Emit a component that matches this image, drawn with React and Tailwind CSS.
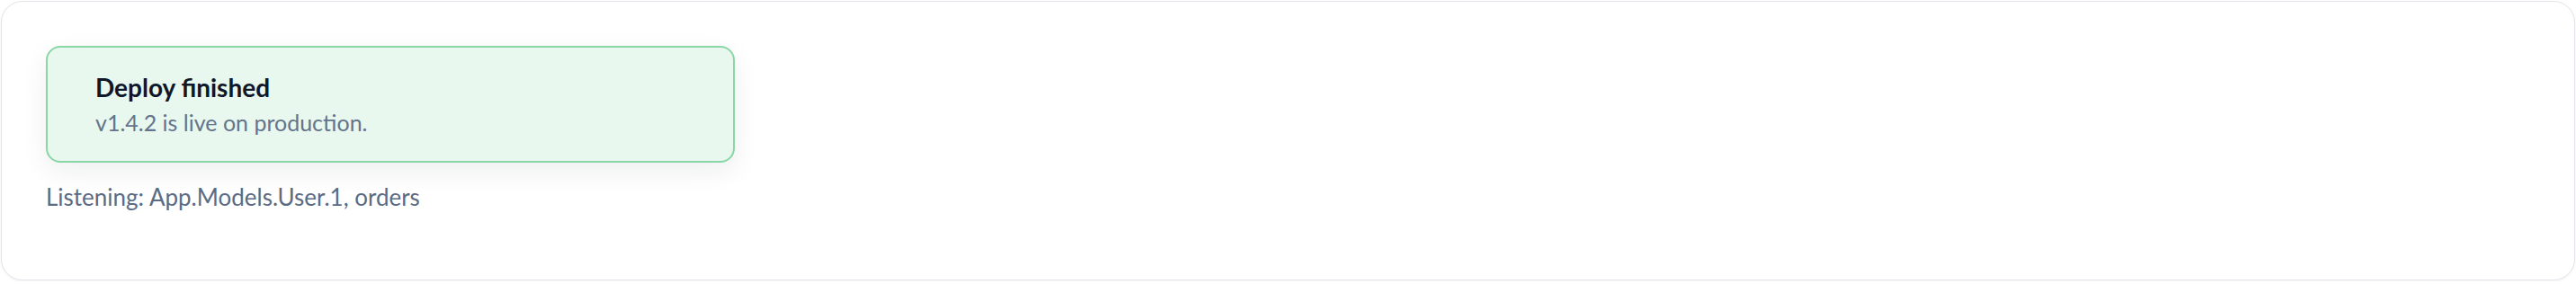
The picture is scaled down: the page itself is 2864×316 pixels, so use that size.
export default function App() {
	return (
		<div className="bg-white p-px" style={ { fontFamily: 'Lato, "Noto Sans", sans-serif' } }>
			<div className="rounded-[24px] border border-[#e4e4ea] bg-white px-[49px] pt-[49px] pb-[76px] shadow-[0_1px_3px_rgba(0,0,0,0.06)]">
				{ /* Toast */ }
				<div className="w-[766px] rounded-[16px] border-2 border-[#8ad6a6] bg-[#e8f8ee] pl-[53px] pt-[26px] pb-[27px] shadow-[0_10px_30px_rgba(15,23,42,0.07)]">
					<div className="text-[28px] font-bold leading-[36px] text-[#0f172a]">
						Deploy finished
					</div>
					<div className="mt-[5px] text-[25px] leading-[32px] text-[#64748b]">
						v1.4.2 is live on production.
					</div>
				</div>
				<div className="mt-[22px] text-[26px] leading-[32px] text-[#5b6b84]">
					Listening: App.Models.User.1, orders
				</div>
			</div>
		</div>
	);
}
